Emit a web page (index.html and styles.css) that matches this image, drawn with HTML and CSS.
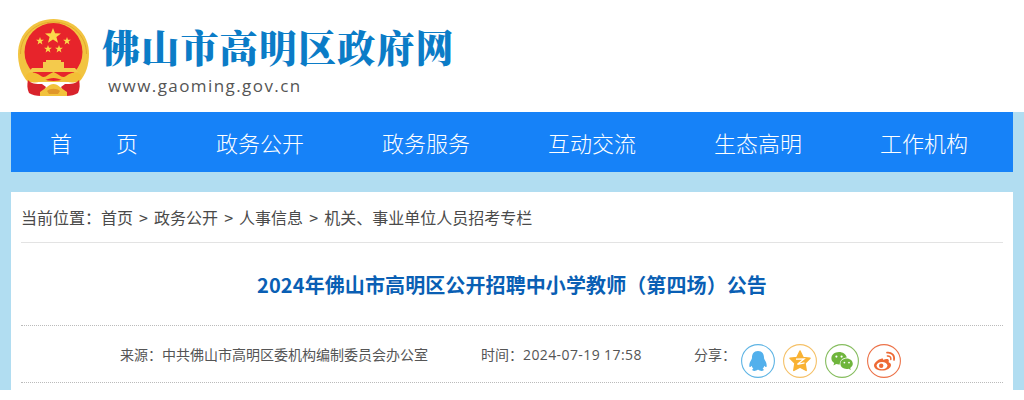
FILE: index.html
```html
<!DOCTYPE html>
<html lang="zh-CN">
<head>
<meta charset="utf-8">
<title>2024年佛山市高明区公开招聘中小学教师（第四场）公告</title>
<link rel="stylesheet" href="styles.css">
</head>
<body>
<header class="top">
  <svg class="emblem" viewBox="0 0 72 80" width="72" height="80" aria-hidden="true">
    <path d="M10 64 C3 57 0 46 0 36 C0 15 16 1 35.500 1 C55 1 71 15 71 36 C71 46 68 57 61 64 Z" fill="#f2c440"/>
    <path d="M2.500 36 C2.500 18 17 4 35.500 4 C54 4 68.500 18 68.500 36" fill="none" stroke="#e3a92f" stroke-width="1"/>
    <circle cx="35.500" cy="34" r="29" fill="#e7242b"/>
    <polygon points="35,10 37.100,15.200 43,15.500 38.400,19.100 40,24.800 35,21.600 30,24.800 31.600,19.100 27,15.500 32.900,15.200" fill="#fbd94a"/>
    <polygon points="22,19 23,21.700 25.900,21.800 23.600,23.600 24.400,26.400 22,24.800 19.600,26.400 20.400,23.600 18.100,21.800 21,21.700" fill="#fbd94a"/>
    <polygon points="49,19 50,21.700 52.900,21.800 50.600,23.600 51.400,26.400 49,24.800 46.600,26.400 47.400,23.600 45.100,21.800 48,21.700" fill="#fbd94a"/>
    <polygon points="30,27 31,29.700 33.900,29.800 31.600,31.600 32.400,34.400 30,32.800 27.600,34.400 28.400,31.600 26.100,29.800 29,29.700" fill="#fbd94a"/>
    <polygon points="41,27 42,29.700 44.900,29.800 42.600,31.600 43.400,34.400 41,32.800 38.600,34.400 39.400,31.600 37.100,29.800 40,29.700" fill="#fbd94a"/>
    <path d="M28 42 L43 42 L43 44 L46 44 L46 50 L25 50 L25 44 L28 44 Z" fill="#f4ca4c"/>
    <path d="M14 50 L57 50 L60 54 L11 54 Z" fill="#f4ca4c"/>
    <path d="M8 57 C12 53 18 54 23 58 C27 61 30 56 35.500 54 C41 56 44 61 48 58 C53 54 59 53 63 57 C65 61 60 65 55 64.500 C48 65 42 60 35.500 60 C29 60 23 65 16 64.500 C11 65 6 61 8 57 Z" fill="#f3bf35"/>
    <path d="M10 62 C13 66 18 66 24 66 L28 69 L23 78 C18 78 14 77 11 75 C9 71 9 66 10 62 Z" fill="#d8232c"/>
    <path d="M61 62 C58 66 53 66 47 66 L43 69 L48 78 C53 78 57 77 60 75 C62 71 62 66 61 62 Z" fill="#d8232c"/>
    <path d="M22 74 C27 71 31 66 35.500 66 C40 66 44 71 49 74 L49 78 L22 78 Z" fill="#f2c23c"/>
    <path d="M29 73 C32 70 39 70 42 73 L40 76 L31 76 Z" fill="#e0962a"/>
  </svg>
  <div class="brand">
    <div class="brand-name">佛山市高明区政府网</div>
    <div class="brand-url">www.gaoming.gov.cn</div>
  </div>
</header>
<div class="stage">
  <nav class="nav">
    <a class="nav-item">首&emsp;&emsp;页</a>
    <a class="nav-item">政务公开</a>
    <a class="nav-item">政务服务</a>
    <a class="nav-item">互动交流</a>
    <a class="nav-item">生态高明</a>
    <a class="nav-item">工作机构</a>
  </nav>
  <main class="panel">
    <div class="crumbs">当前位置：首页 &gt; 政务公开 &gt; 人事信息 &gt; 机关、事业单位人员招考专栏</div>
    <h1 class="headline">2024年佛山市高明区公开招聘中小学教师（第四场）公告</h1>
    <div class="meta">
      <span class="source">来源：中共佛山市高明区委机构编制委员会办公室</span>
      <span class="time">时间：<span class="stamp">2024-07-19 17:58</span></span>
      <span class="share">分享：</span>
      <span class="icons">
        <svg class="ring" viewBox="0 0 34 34" width="34" height="34" aria-hidden="true">
          <circle cx="17" cy="17" r="16.400" fill="#fff" stroke="#5eb4e4" stroke-width="1.100"/>
          <path d="M17 7 C12.600 7 11 10.400 11 13.400 C11 14.400 10.800 15 10.200 16 C9 18 8 20 8.400 22.600 C8.600 23.600 9.800 23 10.600 21.800 C11 23 11.600 24 12.400 24.600 C11.400 25.200 11 25.800 11.600 26.400 C12.600 27.200 15.400 27 16.600 25.800 L17.400 25.800 C18.600 27 21.400 27.200 22.400 26.400 C23 25.800 22.600 25.200 21.600 24.600 C22.400 24 23 23 23.400 21.800 C24.200 23 25.400 23.600 25.600 22.600 C26 20 25 18 23.800 16 C23.200 15 23 14.400 23 13.400 C23 10.400 21.400 7 17 7 Z" fill="#52b0ec"/>
        </svg>
        <svg class="ring" viewBox="0 0 34 34" width="34" height="34" aria-hidden="true">
          <circle cx="17" cy="17" r="16.400" fill="#fff" stroke="#f5c168" stroke-width="1.100"/>
          <path d="M17 7 L20 13.400 L27 14.300 L22 19.200 L23.200 26.400 L17 23.200 L10.800 26.400 L12 19.200 L7 14.300 L14 13.400 Z" fill="#f9b233" stroke="#f9b233" stroke-width="1.500" stroke-linejoin="round"/>
          <path d="M13 15.200 L21 15 L14.500 20.300 L21.500 18.800" fill="none" stroke="#fff" stroke-width="1.300"/>
        </svg>
        <svg class="ring" viewBox="0 0 34 34" width="34" height="34" aria-hidden="true">
          <circle cx="17" cy="17" r="16.400" fill="#fff" stroke="#86bd5f" stroke-width="1.100"/>
          <path d="M14 8 C9.600 8 6.400 10.800 6.400 14.200 C6.400 16.200 7.400 17.800 9.200 19 L8.400 21.400 L11.200 20 C12 20.300 13 20.400 14 20.400 L14.800 20.400 C14.400 16.800 17.600 13.600 21.800 13.400 C21 10.200 17.800 8 14 8 Z" fill="#6fb53c"/>
          <path d="M21.600 14.600 C18 14.600 15.400 17 15.400 19.800 C15.400 22.600 18 25 21.600 25 C22.400 25 23 24.900 23.600 24.700 L25.800 26 L25.200 23.900 C26.800 22.800 27.800 21.400 27.800 19.800 C27.800 17 25.200 14.600 21.600 14.600 Z" fill="#6fb53c"/>
          <circle cx="11.400" cy="12.600" r="1.100" fill="#fff"/><circle cx="16.600" cy="12.600" r="1.100" fill="#fff"/>
          <circle cx="19.400" cy="18.600" r=".9" fill="#fff"/><circle cx="24" cy="18.600" r=".9" fill="#fff"/>
        </svg>
        <svg class="ring" viewBox="0 0 34 34" width="34" height="34" aria-hidden="true">
          <circle cx="17" cy="17" r="16.400" fill="#fff" stroke="#ec7248" stroke-width="1.100"/>
          <path d="M15 14.500 C10.600 15.400 7 19 7 21.600 C7 24.600 10.800 26.600 15 26.600 C20 26.600 24 24 24 21 C24 19.400 22.800 18.600 21.600 18.200 C22 17 22 16 21.400 15.600 C20.400 14.800 18.200 15 16.200 16 C16.400 15 16 14.300 15 14.500 Z" fill="#ee6a35"/>
          <ellipse cx="15" cy="21.600" rx="5.400" ry="3.700" fill="#fff"/>
          <circle cx="14.200" cy="21.800" r="2.200" fill="#ee6a35"/>
          <path d="M20 8.600 C24.600 8 28 11.600 27 16" fill="none" stroke="#ee6a35" stroke-width="1.700" stroke-linecap="round"/>
          <path d="M20.400 12 C22.600 11.700 24.200 13.400 23.800 15.400" fill="none" stroke="#ee6a35" stroke-width="1.500" stroke-linecap="round"/>
        </svg>
      </span>
    </div>
  </main>
</div>
</body>
</html>
```

FILE: styles.css
```css
* { box-sizing: border-box; }
html, body { margin: 0; height: 400px; overflow: hidden; background: #fff; }
body { font-family: "Noto Sans CJK SC", "Noto Sans", sans-serif; }

.top { height: 122px; display: flex; align-items: flex-start; padding: 18px 0 0 18px; gap: 12px; }
.emblem { flex: none; }
.brand-name {
  font-family: "Noto Serif CJK SC", "Noto Sans CJK SC", sans-serif;
  font-weight: 900; font-size: 38px; line-height: 56px; letter-spacing: 1.200px; color: #0b7cc7;
  white-space: nowrap;
}
.brand-url {
  font-family: "Open Sans", sans-serif; font-size: 17px; line-height: 24px; letter-spacing: 1.420px;
  color: #555; margin: 0 0 0 6px;
}

.stage { background: #b1ddf1; height: 278px; padding: 0 11px; }
.nav {
  display: grid; grid-template-columns: repeat(6, 166px); height: 60px; margin-top: -10px; position: relative;
  background: #1682f8; width: 1002px;
}
.nav-item { display: block; text-align: center; color: #fff; font-size: 22px; font-weight: 300; line-height: 60px; }

.panel { background: #fff; margin-top: 20px; height: 208px; padding: 0 10px; }
.crumbs { height: 51px; line-height: 50px; font-size: 16px; color: #4a4a4a; border-bottom: 1px solid #e3e3e3; word-spacing: 2.500px; }
.headline {
  margin: 0; height: 83px; line-height: 84px; text-align: center; font-size: 20px; font-weight: 700; color: #0a5fb4;
  border-bottom: 1px dotted #bbb; letter-spacing: .1px;
}
.meta {
  height: 57px; display: flex; align-items: center; font-size: 14px; color: #555;
  border-bottom: 1px dotted #bbb; padding-left: 99px;
}
.source { width: 361px; }
.time { width: 213px; }
.stamp { font-family: "Open Sans", sans-serif; letter-spacing: .4px; }
.share { width: 47px; }
.icons { display: flex; gap: 8px; margin-top: 14px; }
.ring { display: block; }
```
